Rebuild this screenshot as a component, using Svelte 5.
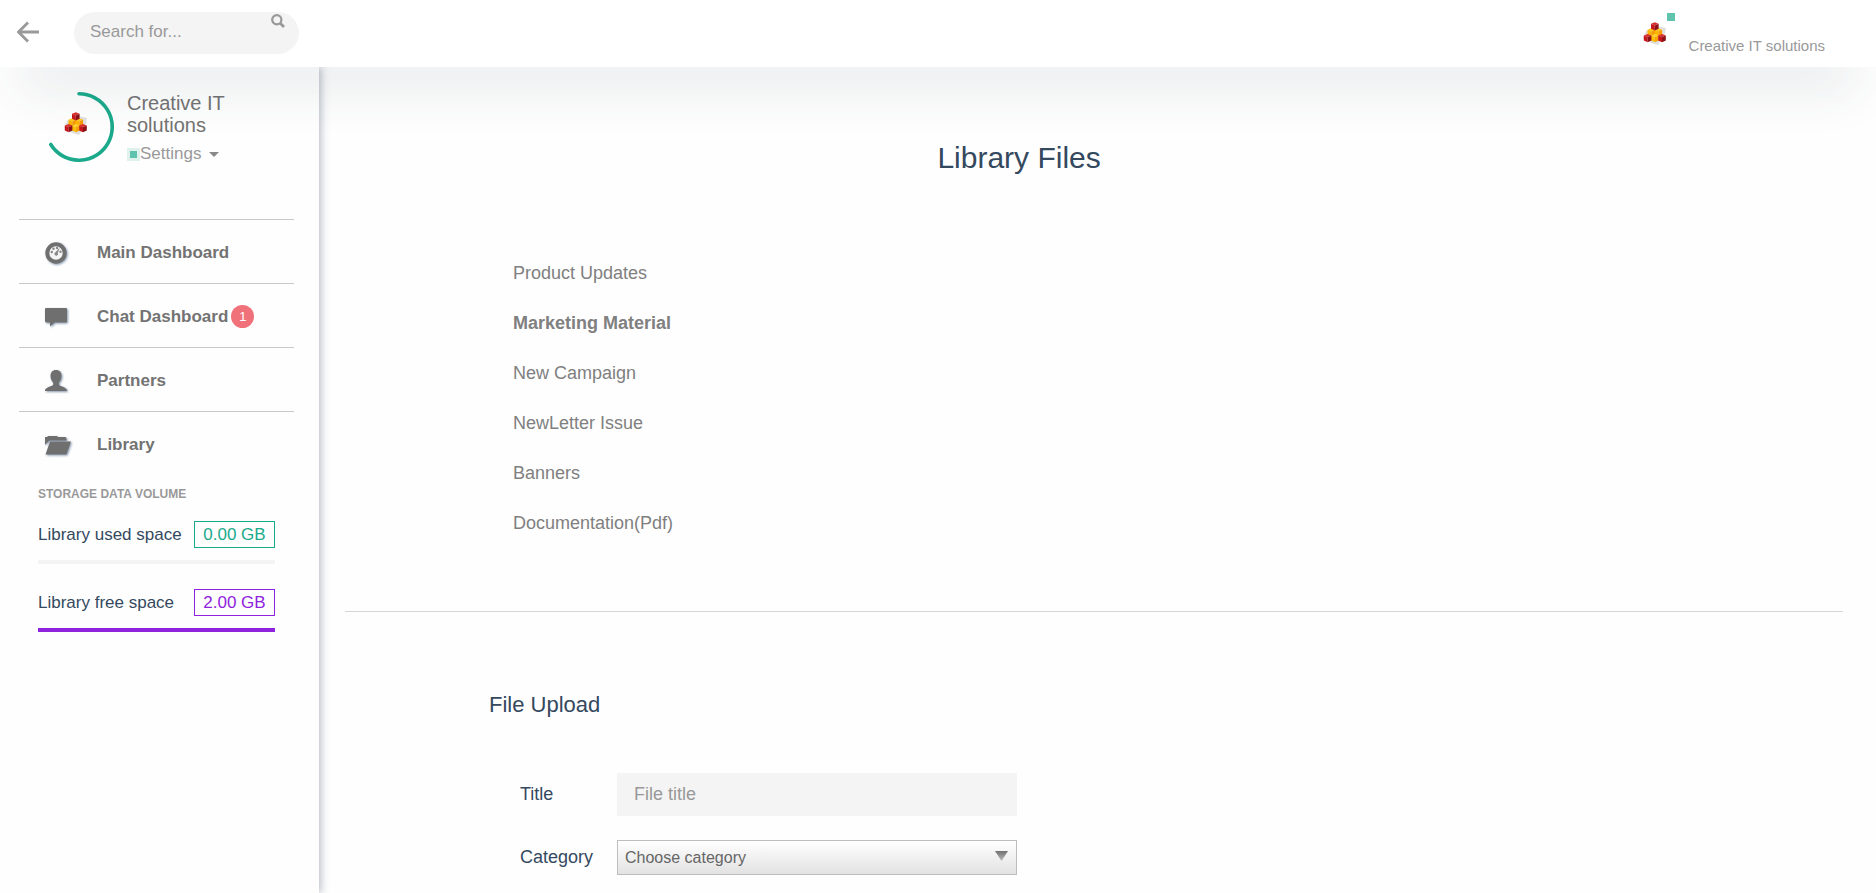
<script>
  let query = $state('');
  let title = $state('');
  let category = $state('');

  const nav = [
    { label: 'Main Dashboard', icon: 'dashboard' },
    { label: 'Chat Dashboard', icon: 'comment', badge: 1 },
    { label: 'Partners', icon: 'user' },
    { label: 'Library', icon: 'folder' }
  ];
  const folders = [
    'Product Updates',
    'Marketing Material',
    'New Campaign',
    'NewLetter Issue',
    'Banners',
    'Documentation(Pdf)'
  ];
  const storage = [
    { label: 'Library used space', value: '0.00 GB', percent: 0, tone: 'green' },
    { label: 'Library free space', value: '2.00 GB', percent: 100, tone: 'purple' }
  ];
</script>

{#snippet cube(x, y, top, left, right)}
  <path d="M{x} {y - 4}l3.800 1.500-3.800 1.700-3.800-1.700z" fill={top} />
  <path d="M{x - 3.8} {y - 2.5}l3.800 1.700v5l-3.800-1.700z" fill={left} />
  <path d="M{x + 3.8} {y - 2.5}l-3.800 1.700v5l3.800-1.700z" fill={right} />
{/snippet}

{#snippet logo()}
  <svg class="logo" viewBox="0 0 24 24" width="24" height="24" aria-hidden="true">
    <path d="M3 9l11-5 9 2-1 6-7 11-7-2-8-5z" fill="#e0e0e0" />
    {@render cube(8.3, 10.2, '#ffc61a', '#ffb400', '#f59a00')}
    {@render cube(15.3, 10.2, '#ffc61a', '#ffb400', '#f59a00')}
    {@render cube(11.8, 16, '#ffd030', '#ffbf00', '#f7a300')}
    {@render cube(11.8, 4.2, '#d93030', '#c8171c', '#8d1016')}
    {@render cube(4.6, 16, '#d93030', '#c8171c', '#8d1016')}
    {@render cube(19, 16, '#d93030', '#c8171c', '#8d1016')}
  </svg>
{/snippet}

<header>
  <button class="back" aria-label="Back">
    <svg viewBox="0 0 22 22" width="22" height="22"><path d="M22 11H2M11 1.500L1.500 11l9.500 9.500" fill="none" stroke="#999" stroke-width="2.800" /></svg>
  </button>
  <form class="search" onsubmit={(e) => e.preventDefault()}>
    <input type="text" aria-label="Search" placeholder="Search for..." bind:value={query} />
    <button aria-label="Submit search">
      <svg viewBox="0 0 14 14" width="14" height="14"><circle cx="5.800" cy="5.800" r="4.600" fill="none" stroke="#999" stroke-width="2.200" /><path d="M9 9l4 4" stroke="#999" stroke-width="2.800" /></svg>
    </button>
  </form>
  <a class="account" href="#profile">
    <span class="avatar">{@render logo()}<i></i></span>
    <span>Creative IT solutions</span>
  </a>
</header>

<div class="page">
  <aside>
    <section class="profile">
      <div class="ring">
        <svg class="arc" viewBox="0 0 70 70" width="70" height="70" aria-hidden="true">
          <path d="M35 1.800A33.200 33.200 0 1 1 6.800 52.500" fill="none" stroke="#1aaa8b" stroke-width="3.600" stroke-linecap="round" />
        </svg>
        {@render logo()}
      </div>
      <div class="who">
        <h2>Creative IT solutions</h2>
        <button class="settings"><i></i>Settings<b></b></button>
      </div>
    </section>

    <nav>
      {#each nav as item}
        <a href="#{item.icon}">
          <svg class="icon" viewBox="0 0 26 22" width="26" height="22" aria-hidden="true">
            {#if item.icon === 'dashboard'}
              <circle cx="11" cy="11" r="8.700" fill="#f4f4f4" stroke="#6f6f6f" stroke-width="4" />
              <g fill="#888"><circle cx="6.800" cy="10" r="1.200" /><circle cx="8.500" cy="6.800" r="1.200" /><circle cx="12" cy="6" r="1.200" /><circle cx="15.500" cy="9.800" r="1.200" /><path d="M14.800 5.500l-2 5.500a1.800 1.800 0 1 1-2.300-.8z" /></g>
            {:else if item.icon === 'comment'}
              <path d="M1 2h20q1 0 1 1v12.500q0 1-1 1H9.500L5 20.500v-4H2q-2 0-2-1.500V3Q0 2 1 2z" />
            {:else if item.icon === 'user'}
              <path d="M11 0c3.600 0 5.500 2.400 5.500 5.800 0 3.200-1.200 5.300-2.700 6.600v1.800c0 1.200 1.200 1.600 3.200 2.400 2.600 1 5 1.900 5 4.400H0c0-2.500 2.400-3.400 5-4.400 2-.8 3.200-1.200 3.200-2.400v-1.800C6.700 11.100 5.500 9 5.500 5.800 5.500 2.400 7.400 0 11 0z" />
            {:else}
              <path d="M0 11V3h2l1-1h9l1 1h7q1.500 0 1.500 1.500v2H5q-1.200 0-1.800 1zM5 7.500h21l-4.500 13H.5z" />
            {/if}
          </svg>
          <span>{item.label}</span>
          {#if item.badge}<em>{item.badge}</em>{/if}
        </a>
      {/each}
    </nav>

    <section class="storage">
      <h3>STORAGE DATA VOLUME</h3>
      {#each storage as row}
        <div class="volume {row.tone}">
          <div class="line"><span>{row.label}</span><strong>{row.value}</strong></div>
          <div class="track"><div style="width: {row.percent}%"></div></div>
        </div>
      {/each}
    </section>
  </aside>

  <main>
    <h1>Library Files</h1>
    <ul>
      {#each folders as folder}
        <li><a href="#files" class:active={folder === 'Marketing Material'}>{folder}</a></li>
      {/each}
    </ul>
    <hr />
    <form class="upload" onsubmit={(e) => e.preventDefault()}>
      <h2>File Upload</h2>
      <div class="field">
        <label for="title">Title</label>
        <input id="title" type="text" placeholder="File title" bind:value={title} />
      </div>
      <div class="field">
        <label for="category">Category</label>
        <div class="pick">
          <select id="category" bind:value={category}>
            <option value="">Choose category</option>
            {#each folders as folder}<option>{folder}</option>{/each}
          </select>
          <svg viewBox="0 0 13 10" width="13" height="10" aria-hidden="true">
            <defs><linearGradient id="fade" x2="0" y2="1"><stop stop-color="#707070" /><stop offset="1" stop-color="#bbb" /></linearGradient></defs>
            <path d="M0 0h13L6.500 10z" fill="url(#fade)" />
          </svg>
        </div>
      </div>
    </form>
  </main>
</div>

<style>
  :global(*) { box-sizing: border-box; }
  :global(body) {
    margin: 0;
    background: #fefefe;
    color: #34495e;
    font-family: "Liberation Sans", Arial, sans-serif;
    font-size: 17px;
  }
  h1, h2, h3, ul { margin: 0; padding: 0; font-weight: 400; }
  a { color: inherit; text-decoration: none; }
  button { padding: 0; border: 0; background: none; font: inherit; color: inherit; cursor: pointer; }
  input, select { font: inherit; }
  svg { display: block; }

  header {
    position: relative;
    z-index: 2;
    display: flex;
    align-items: center;
    height: 67px;
    padding: 0 51px 0 17px;
    background: #fff;
    box-shadow: 0 38px 50px -18px rgba(44, 58, 75, 0.13);
  }
  .back { margin-right: 35px; margin-bottom: 4px; }
  .search {
    display: flex;
    align-items: flex-start;
    width: 225px;
    height: 42px;
    margin-bottom: 1px;
    padding-right: 14px;
    border-radius: 21px;
    background: #f4f4f4;
  }
  .search input {
    flex: 1;
    min-width: 0;
    height: 40px;
    padding: 0 0 0 16px;
    border: 0;
    outline: 0;
    background: none;
  }
  .search button { margin-top: 2px; }
  input::placeholder { color: #999; opacity: 1; }
  .account { display: flex; align-items: center; gap: 22px; margin-left: auto; color: #999; font-size: 15px; }
  .account > span:last-child { padding-top: 24px; }
  .avatar { position: relative; }
  .avatar i { position: absolute; top: -9px; right: -8px; width: 8px; height: 8px; background: #5fc3ae; }

  .page { display: flex; min-height: calc(100vh - 67px); }
  aside {
    flex: 0 0 319px;
    padding: 25px 25px 0 19px;
    background: #fefefe;
    box-shadow: 2px 0 8px rgba(52, 65, 100, 0.35);
  }
  .profile { display: flex; gap: 13px; height: 127px; padding-left: 25px; }
  .ring { position: relative; display: grid; place-items: center; width: 70px; height: 70px; padding: 0 7px 6px 0; }
  .arc { position: absolute; inset: 0; }
  .who { width: 120px; }
  .who h2 { color: #737373; font-size: 20px; line-height: 22px; }
  .settings { display: flex; align-items: center; margin-top: 7px; color: #999; line-height: 22px; }
  .settings i { width: 13px; height: 13px; border: 3px solid #def1ec; background: #5fc3ae; }
  .settings b { margin-left: 8px; border: 5px solid transparent; border-top-color: #888; border-bottom: 0; }

  nav a {
    display: flex;
    align-items: center;
    height: 64px;
    padding: 2px 0 0 26px;
    border-top: 1px solid #c9c9c9;
    color: #737373;
    font-weight: 700;
  }
  .icon { margin-right: 26px; fill: #6f6f6f; filter: drop-shadow(1px 1px 1px rgba(52, 82, 120, 0.6)); overflow: visible; }
  nav em {
    width: 23px;
    height: 23px;
    margin-left: 3px;
    border-radius: 50%;
    background: #f0717a;
    color: #fff;
    font-size: 13px;
    font-style: normal;
    font-weight: 400;
    line-height: 23px;
    text-align: center;
  }

  .storage { padding: 11px 19px 0; }
  .storage h3 { color: #999; font-size: 12px; font-weight: 700; line-height: 16px; }
  .volume { margin-top: 19px; }
  .volume + .volume { margin-top: 25px; }
  .line { display: flex; align-items: center; justify-content: space-between; height: 27px; }
  .line strong { min-width: 81px; border: 1px solid; font-weight: 400; line-height: 25px; text-align: center; }
  .track { height: 4px; margin-top: 12px; background: #f4f4f4; }
  .track div { height: 100%; }
  .green strong { color: #1aaa8b; }
  .purple strong { color: #8f22dd; }
  .purple .track div { background: #8f22dd; }

  main { flex: 1; min-width: 0; padding: 71px 33px 17px 26px; font-size: 18px; }
  h1 { width: 90%; font-size: 30px; line-height: 40px; text-align: center; }
  ul { margin: 70px 0 63px 168px; list-style: none; color: #808080; }
  li { line-height: 50px; }
  .active { font-weight: 700; }
  hr { margin: 0; border: 0; border-top: 1px solid #d6d6d6; }
  .upload { padding: 79px 0 0 144px; }
  .upload h2 { margin-bottom: 54px; font-size: 22px; line-height: 28px; }
  .field { display: flex; align-items: center; gap: 16px; margin: 0 0 24px 31px; }
  .field:last-child { margin-bottom: 0; }
  .field label { width: 81px; }
  .field input { width: 400px; height: 43px; padding: 0 17px; border: 0; border-radius: 0; background: #f4f4f4; }
  .pick { position: relative; width: 400px; }
  .pick select {
    display: block;
    appearance: none;
    width: 100%;
    height: 35px;
    padding: 0 30px 0 7px;
    border: 1px solid #bdbdbd;
    border-radius: 0;
    background: linear-gradient(#fff, #e2e2e2);
    color: #666;
    font-size: 16px;
  }
  .pick svg { position: absolute; top: 11px; right: 9px; pointer-events: none; }
</style>
